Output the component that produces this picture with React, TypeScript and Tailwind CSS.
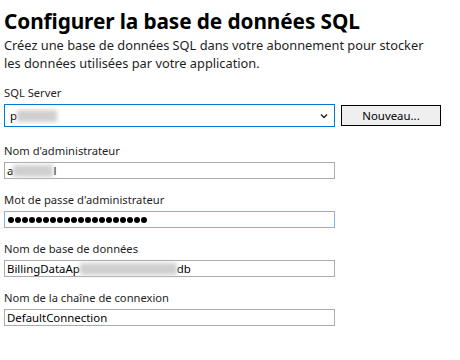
import React from "react";

const font = { fontFamily: '"Noto Sans", "Open Sans", sans-serif' };

function Label({ children }: { children: React.ReactNode }) {
  return <div className="text-[11.2px] leading-[16px] text-[#1e1e1e] mb-[3px]">{children}</div>;
}

function Blur({ w }: { w: number }) {
  return (
    <span
      className="inline-block h-[12px] bg-[#cfcfcf] blur-[2px] align-middle"
      style={{ width: w }}
    />
  );
}

export default function App() {
  return (
    <div className="w-[460px] h-[360px] bg-white px-[4px] pt-[8px] text-black" style={font}>
      <h1 className="text-[20.8px] leading-[26px] font-bold tracking-[-0.1px]">
        Configurer la base de données SQL
      </h1>
      <p className="text-[12.8px] leading-[18px] text-[#1e1e1e] mt-[2px]">
        Créez une base de données SQL dans votre abonnement pour stocker
        <br />
        les données utilisées par votre application.
      </p>

      <div className="mt-[13px]">
        <Label>SQL Server</Label>
        <div className="flex gap-[6px] items-center">
          <div className="w-[331px] h-[23px] border border-[#0078d7] flex items-center pl-[5px] pr-[6px] text-[11.4px]">
            <span>p</span>
            <Blur w={40} />
            <svg className="ml-auto" width="8" height="6" viewBox="0 0 8 6">
              <path d="M1 1.5 L4 4.5 L7 1.5" fill="none" stroke="#222" strokeWidth="1.4" />
            </svg>
          </div>
          <div className="w-[100px] h-[21px] border border-black bg-[#efefef] flex items-center justify-center text-[11.4px]">
            Nouveau...
          </div>
        </div>
      </div>

      <div className="mt-[16px]">
        <Label>Nom d'administrateur</Label>
        <div className="w-[331px] h-[17px] border border-[#ababab] flex items-center pl-[2px] text-[11.4px]">
          <span>a</span>
          <Blur w={40} />
          <span>l</span>
        </div>
      </div>

      <div className="mt-[13px]">
        <Label>Mot de passe d'administrateur</Label>
        <div className="w-[331px] h-[17px] border border-[#7eb4ea] flex items-center pl-[3px] gap-[1px]">
          {Array.from({ length: 20 }).map((_, i) => (
            <span key={i} className="w-[6px] h-[6px] rounded-full bg-black" />
          ))}
        </div>
      </div>

      <div className="mt-[13px]">
        <Label>Nom de base de données</Label>
        <div className="w-[331px] h-[17px] border border-[#ababab] flex items-center pl-[2px] text-[11.4px]">
          <span>BillingDataAp</span>
          <Blur w={97} />
          <span>db</span>
        </div>
      </div>

      <div className="mt-[13px]">
        <Label>Nom de la chaîne de connexion</Label>
        <div className="w-[331px] h-[17px] border border-[#ababab] flex items-center pl-[2px] text-[11.4px]">
          DefaultConnection
        </div>
      </div>
    </div>
  );
}
